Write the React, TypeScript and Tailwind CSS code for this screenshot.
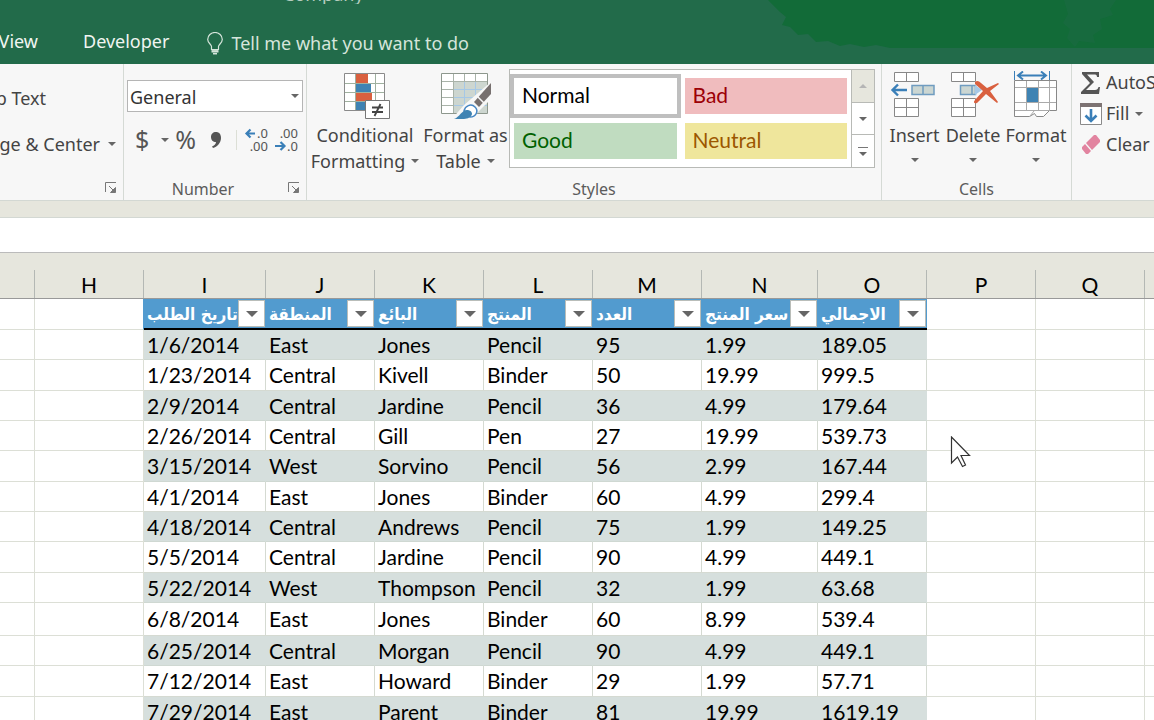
import React from "react";
import clsx from "clsx";

const columns = [
  { letter: "", width: 35 },
  { letter: "H", width: 109 },
  { letter: "I", width: 122 },
  { letter: "J", width: 109 },
  { letter: "K", width: 109 },
  { letter: "L", width: 109 },
  { letter: "M", width: 109 },
  { letter: "N", width: 116 },
  { letter: "O", width: 109 },
  { letter: "P", width: 109 },
  { letter: "Q", width: 109 },
  { letter: "", width: undefined },
];

const fields = ["تاريخ الطلب", "المنطقة", "البائع", "المنتج", "العدد", "سعر المنتج", "الاجمالي"];

const orders = [
  { height: 30, cells: ["1/6/2014", "East", "Jones", "Pencil", "95", "1.99", "189.05"] },
  { height: 31, cells: ["1/23/2014", "Central", "Kivell", "Binder", "50", "19.99", "999.5"] },
  { height: 30, cells: ["2/9/2014", "Central", "Jardine", "Pencil", "36", "4.99", "179.64"] },
  { height: 30, cells: ["2/26/2014", "Central", "Gill", "Pen", "27", "19.99", "539.73"] },
  { height: 31, cells: ["3/15/2014", "West", "Sorvino", "Pencil", "56", "2.99", "167.44"] },
  { height: 30, cells: ["4/1/2014", "East", "Jones", "Binder", "60", "4.99", "299.4"] },
  { height: 30, cells: ["4/18/2014", "Central", "Andrews", "Pencil", "75", "1.99", "149.25"] },
  { height: 31, cells: ["5/5/2014", "Central", "Jardine", "Pencil", "90", "4.99", "449.1"] },
  { height: 30, cells: ["5/22/2014", "West", "Thompson", "Pencil", "32", "1.99", "63.68"] },
  { height: 33, cells: ["6/8/2014", "East", "Jones", "Binder", "60", "8.99", "539.4"] },
  { height: 30, cells: ["6/25/2014", "Central", "Morgan", "Pencil", "90", "4.99", "449.1"] },
  { height: 31, cells: ["7/12/2014", "East", "Howard", "Binder", "29", "1.99", "57.71"] },
  { height: 30, cells: ["7/29/2014", "East", "Parent", "Binder", "81", "19.99", "1619.19"] },
];

const Caret = ({ className }: { className?: string }) => (
  <svg viewBox="0 0 8 4" className={clsx("h-1 w-2 shrink-0", className || "fill-[#666]")} aria-hidden="true">
    <path d="M0 0h8L4 4z" />
  </svg>
);

const Launcher = ({ label }: { label: string }) => (
  <button aria-label={label} className="absolute right-1.5 bottom-1.5">
    <svg viewBox="0 0 12 12" className="size-3 fill-none stroke-[#777]">
      <path d="M.5 10V.5H11M4 4l6 6" />
      <path d="M10.500 5.500v5h-5z" className="fill-[#777]" />
    </svg>
  </button>
);

const GroupLabel = ({ children, className }: { children: React.ReactNode; className?: string }) => (
  <div className={clsx("absolute inset-x-0 bottom-0 text-center text-[16px] leading-[22px] text-[#5c5c5c]", className)}>
    {children}
  </div>
);

const BulbIcon = () => (
  <svg viewBox="0 0 16 23" className="h-[23px] w-4 shrink-0 fill-none stroke-[#d5e5db]">
    <path strokeWidth="1.2" d="M4.500 17.500v-3C4.500 12.500.7 11 .7 7.500a7.300 7 0 0 1 14.600 0c0 3.500-3.800 5-3.800 7v3z" />
    <path strokeWidth="2.400" d="M4.500 19.300h7" />
    <path strokeWidth="1.500" d="M6 21.700h4" />
  </svg>
);

const ConditionalIcon = () => (
  <svg viewBox="0 0 48 50" className="ml-1 h-[50px] w-12 fill-none">
    <path fill="#fff" stroke="#8a8a8a" d="M1.500 2.500h40v37h-40z" />
    <path stroke="#9fb09f" d="M12.500 3v36M32.500 3v36M22.500 3v36M2 12.500h39M2 21.500h39M2 30.500h39" />
    <path fill="#d9603f" d="M13 3h12v9H13zM13 22h16v8H13z" />
    <path fill="#3f83b3" d="M13 13h15v8H13zM13 31h10v8H13z" />
    <path fill="#fff" stroke="#777" d="M22.500 29.500h24v18h-24z" />
    <path stroke="#444" strokeWidth="1.800" d="M29 36.500h11M29 41h11M37.500 33l-6 12" />
  </svg>
);

const FormatTableIcon = () => (
  <svg viewBox="0 0 52 50" className="h-[50px] w-[52px] fill-none">
    <path fill="#fff" stroke="#8d978d" d="M1.500 2.500h46v40h-46z" />
    <path fill="#cdd6d0" d="M14 11h33v31H14z" />
    <path stroke="#a9b3a9" d="M13.500 3v39M24.500 3v8M35.500 3v8M2 10.500h45M2 18.500h12M2 26.500h12M2 34.500h12" />
    <path stroke="#a6c8e6" d="M24.500 11v31M35.500 11v31M14 18.500h33M14 26.500h33M14 34.500h33" />
    <path fill="#f7f7f7" d="M52 10v17L38 41l-5 8H11l13-15z" />
    <path fill="#77706f" d="M51 12v11L39 36l-5-5z" />
    <path stroke="#f7f7f7" strokeWidth="1.500" d="M37 25l7 7" />
    <path fill="#fff" stroke="#4686c3" strokeWidth="1.500" d="M24 40c1-5 7-8 11-4 4 4 1 10-5 10z" />
    <path fill="#3f83b3" d="M14 48c6-2 8-10 14-9 4 1 5 4 3 6-3 4-10 3-17 3z" />
  </svg>
);

const InsertIcon = () => (
  <svg viewBox="0 0 46 50" className="mr-1 h-[50px] w-[46px] fill-none">
    <path fill="#fff" stroke="#888" d="M4.500 1.500h24v9h-24zM16.500 2v8M4.500 27.500h24v18h-24zM16.500 28v17M5 36.500h23" />
    <path fill="#cbd6d2" stroke="#6f9cc0" strokeWidth="1.500" d="M22 14.500h22v9H22zM33 15v8" />
    <path stroke="#3a7fb8" strokeWidth="2.400" d="M17 19H3M8 13.500L2.500 19 8 24.500" />
  </svg>
);

const DeleteIcon = () => (
  <svg viewBox="0 0 50 50" className="ml-0.5 h-[50px] w-[50px] fill-none">
    <path fill="#fff" stroke="#888" d="M2.500 1.500h24v9h-24zM14.500 2v8M2.500 27.500h24v18h-24zM14.500 28v17M3 36.500h23" />
    <path fill="#cbd6d2" stroke="#6f9cc0" strokeWidth="1.500" d="M11.500 14.500h15v9h-15zM23 15v8" />
    <path fill="#a6c8e6" d="M26 14l7 5-7 5z" />
    <path fill="#d9603f" d="M26 11c2-2 4-1 6 1l6 5 11-5 1 1-9 7 8 11-1 1-11-9-9 9c-3 1-4-1-2-3l8-9-8-7z" />
  </svg>
);

const FormatIcon = () => (
  <svg viewBox="0 0 46 50" className="h-[50px] w-[46px] fill-none">
    <path stroke="#3a7fb8" strokeWidth="2" d="M6 4.500h26M10 .5l-5 4 5 4M28 .5l5 4-5 4" />
    <path stroke="#3a7fb8" d="M1.500 0v9M36.500 0v9" />
    <path fill="#fff" stroke="#888" d="M1.500 9.500h42v30h-7l-6 6h-7l-2-3-5 3h-15z" />
    <path stroke="#aaa" d="M13.500 10v30M25.500 10v30M36.500 10v30M2 16.500h41M2 31.500h41M2 39.500h35M17 45l4-5" />
    <path fill="#3f83b3" d="M14 17h11v14H14z" />
  </svg>
);

const SumIcon = () => (
  <svg viewBox="0 0 22 22" className="size-[22px] shrink-0">
    <path fill="#555" d="M2 0h17v5h-2c0-2-1-2.500-3-2.500H7L14 10l-8 8h9c2 0 3-1 3.500-3H20l-1 7H1v-2l9-9L2 2z" />
  </svg>
);

const FillIcon = () => (
  <svg viewBox="0 0 22 22" className="size-[22px] shrink-0 fill-none">
    <path fill="#fff" stroke="#8a8a8a" d="M.5 1.500h21v20H.5z" />
    <path fill="#7d7373" d="M0 0h22v4H0z" />
    <path stroke="#3a7fb8" strokeWidth="2.600" d="M11 6v12M5.500 12.500L11 18l5.500-5.500" />
  </svg>
);

const EraserIcon = () => (
  <svg viewBox="0 0 22 22" className="size-[22px] shrink-0">
    <path fill="#e284a0" d="M14 1h2l4 5v2l-8 8-6-7zM5 10l6 7-3 3H6l-4-5v-2z" />
  </svg>
);

const IncreaseDecimalIcon = () => (
  <svg viewBox="0 0 26 26" className="h-[26px] w-[26px]">
    <g className="fill-[#555] font-['Noto_Sans',sans-serif] text-[13px]">
      <text x="25" y="11" textAnchor="end">.0</text>
      <text x="25" y="24" textAnchor="end">.00</text>
    </g>
    <path fill="none" stroke="#3a7fb8" strokeWidth="2.200" d="M12 6.500H4M7.500 2.500l-4 4 4 4" />
  </svg>
);

const DecreaseDecimalIcon = () => (
  <svg viewBox="0 0 26 26" className="h-[26px] w-[26px]">
    <g className="fill-[#555] font-['Noto_Sans',sans-serif] text-[13px]">
      <text x="25" y="11" textAnchor="end">.00</text>
      <text x="25" y="24" textAnchor="end">.0</text>
    </g>
    <path fill="none" stroke="#3a7fb8" strokeWidth="2.200" d="M2 19h9M7.500 15l4 4-4 4" />
  </svg>
);

const TitleBar = () => (
  <header className="relative h-16 shrink-0 bg-[#226b4a] text-[18px] text-[#f0f5f1]">
    <svg viewBox="0 0 394 48" className="absolute top-0 right-0 h-12 w-[394px]" aria-hidden="true">
      <path
        fill="#126b38"
        d="M8 0h386v48H130l-14-3-12 2-14-3-10 2-12-5-12 1-8-8-10 1-8-8-8-2 4-8-6-5z"
      />
      <path fill="#226b4a" opacity=".35" d="M304 0h52l-6 9 3 6-13 4 2 10-9 6 2 8-16-2-4 6-8-9 3-9-7-6 5-9z" />
    </svg>
    <div className="flex h-1 items-end overflow-hidden pl-[283px] text-[#b5cdbf]">
      <span className="leading-5">Company</span>
    </div>
    <nav className="relative flex h-[74px] items-center">
      <a href="#view" className="flex w-[38px] justify-end">View</a>
      <a href="#developer" className="ml-[45px]">Developer</a>
      <label className="ml-[38px] flex items-center gap-2 pt-1">
        <BulbIcon />
        <input
          aria-label="Tell me what you want to do"
          placeholder="Tell me what you want to do"
          className="w-72 bg-transparent placeholder:text-[#d5e5db] outline-none"
        />
      </label>
    </nav>
  </header>
);

const AlignmentGroup = () => (
  <section className="relative w-[124px] shrink-0 overflow-hidden border-r border-[#d5dad5] pt-[18px] whitespace-nowrap">
    <div className="flex h-8 items-center justify-end pr-[77px]">
      <button>Wrap Text</button>
    </div>
    <button className="mt-3.5 flex h-8 w-full items-center justify-end gap-2 pr-[7px]">
      Merge &amp; Center <Caret />
    </button>
    <Launcher label="Alignment settings" />
  </section>
);

const NumberGroup = () => (
  <section className="relative w-[183px] shrink-0 border-r border-[#d5dad5] px-[3px] pt-4">
    <div className="relative">
      <select
        aria-label="Number format"
        className="h-8 w-full appearance-none border border-[#b5b5b5] bg-white pt-0.5 pl-0.5 text-[18px] text-[#333] outline-none"
      >
        <option>General</option>
      </select>
      <Caret className="pointer-events-none absolute top-3.5 right-1 fill-[#666]" />
    </div>
    <div className="mt-2.5 flex h-9 items-center pl-2 text-[25px] text-[#555]">
      <button aria-label="Currency" className="flex items-center gap-3">
        $ <Caret />
      </button>
      <button className="ml-1.5">%</button>
      <button aria-label="Comma style" className="ml-3.5">
        <svg viewBox="0 0 12 18" className="h-[18px] w-3 fill-[#555]">
          <path d="M6 1c3 0 5 2 5 6 0 5-4 9-8 10l-1-1.500c2-1 4-2.500 4-4.500-3 0-5-2-5-5s2-5 5-5z" />
        </svg>
      </button>
      <span className="mr-1.5 ml-3.5 h-5 w-px bg-[#dcdfd6]" />
      <button aria-label="Increase decimal"><IncreaseDecimalIcon /></button>
      <button aria-label="Decrease decimal" className="ml-1"><DecreaseDecimalIcon /></button>
    </div>
    <GroupLabel className="pr-6">Number</GroupLabel>
    <Launcher label="Number settings" />
  </section>
);

const StylesGroup = () => (
  <section className="relative flex w-[575px] shrink-0 border-r border-[#d5dad5]">
    <button className="flex w-[116px] flex-col items-center pt-[7px] leading-[26px]">
      <ConditionalIcon />
      <span className="mt-px">Conditional</span>
      <span className="flex items-center gap-1.5">Formatting <Caret /></span>
    </button>
    <button className="flex w-[85px] flex-col items-center pt-[7px] leading-[26px] whitespace-nowrap">
      <FormatTableIcon />
      <span className="mt-px">Format as</span>
      <span className="flex items-center gap-1.5">Table <Caret /></span>
    </button>
    <div className="mt-[5px] ml-px flex h-[99px] w-[366px] border border-[#b8bab6] bg-white font-[Lato,sans-serif] text-[21px]">
      <div className="grid w-[341px] grid-cols-2 content-start gap-y-px pt-1 leading-8">
        <button className="h-11 border-4 border-[#bfbfbf] bg-white pb-0.5 pl-2 text-left text-black">Normal</button>
        <button className="h-11 border-4 border-white bg-[#f0bcbe] pb-0.5 pl-2 text-left text-[#9c0006]">Bad</button>
        <button className="h-11 border-4 border-white bg-[#c0dcc0] pb-0.5 pl-2 text-left text-[#006100]">Good</button>
        <button className="h-11 border-4 border-white bg-[#efe69c] pb-0.5 pl-2 text-left text-[#9c5700]">Neutral</button>
      </div>
      <div className="flex flex-1 flex-col divide-y divide-[#b8bab6] border-l border-[#b8bab6]">
        <button aria-label="Previous styles" className="flex flex-1 items-center justify-center bg-[#e6e6dd]">
          <Caret className="rotate-180 fill-[#b5b5b5]" />
        </button>
        <button aria-label="Next styles" className="flex flex-1 items-center justify-center"><Caret /></button>
        <button aria-label="More styles" className="flex flex-1 flex-col items-center justify-center gap-1">
          <span className="h-px w-2.5 bg-[#777]" />
          <Caret />
        </button>
      </div>
    </div>
    <GroupLabel>Styles</GroupLabel>
  </section>
);

const cellActions = [
  { label: "Insert", icon: <InsertIcon />, width: "w-[57px]" },
  { label: "Delete", icon: <DeleteIcon />, width: "w-[60px]" },
  { label: "Format", icon: <FormatIcon />, width: "w-[66px]" },
];

const CellsGroup = () => (
  <section className="relative flex w-[190px] shrink-0 border-r border-[#d5dad5] pl-1">
    {cellActions.map(({ label, icon, width }) => (
      <button key={label} className={clsx("flex flex-col items-center pt-[7px] leading-[26px]", width)}>
        {icon}
        <span className="mt-px">{label}</span>
        <Caret className="mt-2.5 fill-[#666]" />
      </button>
    ))}
    <GroupLabel>Cells</GroupLabel>
  </section>
);

const EditingGroup = () => (
  <section className="flex min-w-0 flex-1 flex-col overflow-hidden pt-[3px] pl-2 whitespace-nowrap">
    <button className="flex h-[31px] items-center gap-1"><SumIcon /> AutoSum</button>
    <button className="flex h-[31px] items-center gap-1">
      <FillIcon /> Fill <Caret className="ml-0.5 fill-[#666]" />
    </button>
    <button className="flex h-[31px] items-center gap-1"><EraserIcon /> Clear</button>
  </section>
);

const Sheet = () => (
  <table className="w-full table-fixed border-separate border-spacing-0 bg-white font-[Lato,sans-serif] text-[21px] leading-6 text-black">
    <colgroup>
      {columns.map((column, i) => (
        <col key={i} style={{ width: column.width }} />
      ))}
    </colgroup>
    <thead>
      <tr>
        {columns.map((column, i) => (
          <th key={i} className="h-[46px] border-b border-[#999] bg-[#e6e6dd] p-0 align-bottom font-normal">
            <div className={clsx("h-7 border-[#b4b8b4] pt-[3px]", i < columns.length - 1 && "border-r")}>
              {column.letter}
            </div>
          </th>
        ))}
      </tr>
    </thead>
    <tbody>
      <tr>
        <td className="h-[31px] border-r border-b border-[#dcdfd6] p-0" />
        <td className="border-r border-b border-r-[#529bcf] border-b-[#dcdfd6] p-0" />
        {fields.map((field) => (
          <th key={field} className="border-b-2 border-black bg-[#529bcf] p-0">
            <div className="flex h-[29px] items-center pr-px">
              <span className="min-w-0 flex-1 overflow-hidden pl-[3px] text-left font-['DejaVu_Sans_Condensed','DejaVu_Sans',sans-serif] text-[17px] whitespace-nowrap text-white">
                {field}
              </span>
              <button
                aria-label={`Filter ${field}`}
                className="flex size-[27px] shrink-0 items-center justify-center border border-[#b9bdb9] bg-white"
              >
                <svg viewBox="0 0 12 6" className="h-1.5 w-3 fill-[#666]" aria-hidden="true">
                  <path d="M0 0h12L6 6z" />
                </svg>
              </button>
            </div>
          </th>
        ))}
        <td className="border-r border-b border-[#dcdfd6] p-0" />
        <td className="border-r border-b border-[#dcdfd6] p-0" />
        <td className="border-b border-[#dcdfd6] p-0" />
      </tr>
      {orders.map(({ height, cells }, row) => (
        <tr key={row} style={{ height }}>
          <td className="border-r border-b border-[#dcdfd6] p-0" />
          <td className="border-r border-b border-[#dcdfd6] p-0" />
          {cells.map((cell, i) => (
            <td
              key={i}
              className={clsx(
                "border-r border-b p-0 pl-[3px] whitespace-nowrap",
                row % 2 === 0
                  ? "border-r-[#d6dfdd] border-b-[#cfd8d2] bg-[#d6dfdd]"
                  : "border-[#d5dad2]"
              )}
            >
              {cell}
            </td>
          ))}
          <td className="border-r border-b border-[#dcdfd6] p-0" />
          <td className="border-r border-b border-[#dcdfd6] p-0" />
          <td className="border-b border-[#dcdfd6] p-0" />
        </tr>
      ))}
    </tbody>
  </table>
);

const App: React.FC = () => {
  return (
    <div className="relative flex h-screen flex-col overflow-hidden bg-white font-['Noto_Sans',sans-serif]">
      <TitleBar />
      <div className="flex h-[137px] shrink-0 border-b border-[#d3d8d3] bg-[#f7f7f7] text-[18px] text-[#444]">
        <AlignmentGroup />
        <NumberGroup />
        <StylesGroup />
        <CellsGroup />
        <EditingGroup />
      </div>
      <div className="h-[17px] shrink-0 border-b border-[#d3d8d3] bg-[#e6e6dd]" />
      <input aria-label="Formula bar" className="h-[35px] w-full shrink-0 border-b border-[#bbb] bg-white outline-none" />
      <main className="min-h-0 flex-1 overflow-hidden">
        <Sheet />
      </main>
      <svg viewBox="0 0 22 32" className="absolute top-[436px] left-[950px] h-8 w-[22px]" aria-hidden="true">
        <path fill="#fff" stroke="#333" strokeWidth="1.2" d="M1.500 1v26l6-6 5 9.500 3-1.500-4.500-9.500h8.500z" />
      </svg>
    </div>
  );
};

export default App;
